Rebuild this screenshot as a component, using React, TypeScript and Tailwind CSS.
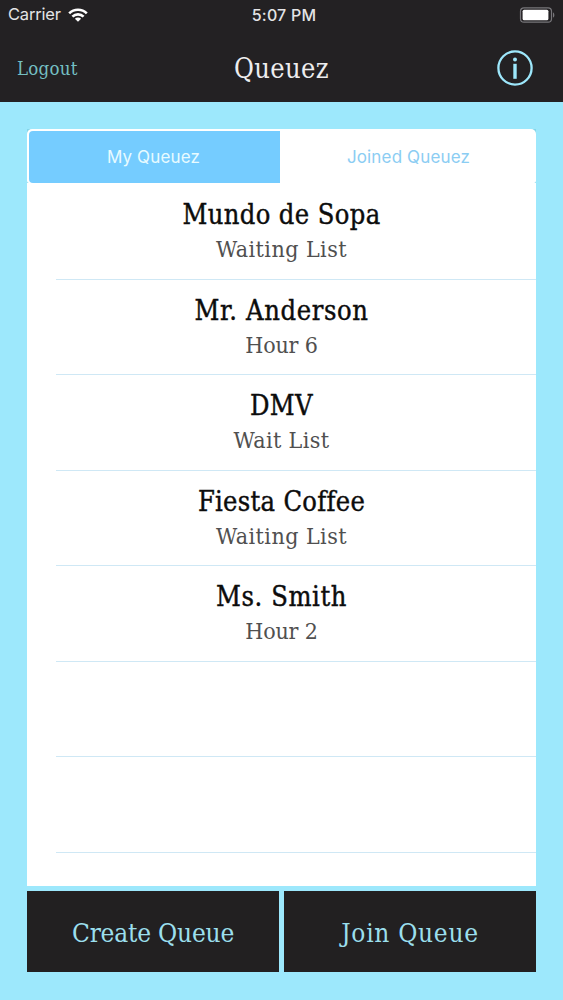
import React, { useState } from 'react';

interface Queue {
  name: string;
  detail: string;
  nameClass: string;
  detailClass: string;
}

const queues: Queue[] = [
  { name: 'Mundo de Sopa', detail: 'Waiting List', nameClass: 'tracking-[0.4px]', detailClass: 'tracking-[0.45px]' },
  { name: 'Mr. Anderson', detail: 'Hour 6', nameClass: 'tracking-[0.65px]', detailClass: 'tracking-[-0.2px]' },
  { name: 'DMV', detail: 'Wait List', nameClass: 'tracking-[0.4px]', detailClass: 'tracking-[0.4px]' },
  { name: 'Fiesta Coffee', detail: 'Waiting List', nameClass: 'tracking-[0.3px]', detailClass: 'tracking-[0.45px]' },
  { name: 'Ms. Smith', detail: 'Hour 2', nameClass: 'tracking-[0.6px]', detailClass: 'tracking-[-0.2px]' },
];

function StatusBar() {
  return (
    <div className="h-[29px] px-2 grid grid-cols-3 items-center text-[#e4e4e6] font-['Inter',sans-serif]">
      <div className="flex items-center gap-[7px]">
        <span className="text-[16.5px] tracking-[-0.2px]">Carrier</span>
        <svg width="20" height="14" viewBox="0 0 20 14" fill="none" stroke="white" strokeWidth="2.6">
          <path d="M1.2 5.4a12.4 12.4 0 0 1 17.6 0" />
          <path d="M4.4 8.7a7.9 7.9 0 0 1 11.2 0" />
          <path d="M10 13.8 6.9 10.7a4.4 4.4 0 0 1 6.2 0Z" fill="white" stroke="none" />
        </svg>
      </div>
      <span className="text-center text-[16px] font-medium tracking-[0.2px] pl-[5px] whitespace-nowrap">5:07 PM</span>
      <div className="flex justify-end">
        <svg width="36" height="16" viewBox="0 0 36 16">
          <rect x="1.5" y="0.8" width="31" height="14.4" rx="3.5" fill="none" stroke="#77767a" strokeWidth="1.2" />
          <rect x="3.6" y="2.8" width="25.8" height="10.4" rx="1.5" fill="white" />
          <path d="M34 5.4c1.8.6 1.8 4.6 0 5.2z" fill="#77767a" />
        </svg>
      </div>
    </div>
  );
}

function NavBar() {
  return (
    <div className="h-[73px] pt-[5px] pl-[17px] pr-[29px] grid grid-cols-[1fr_auto_1fr] items-center">
      <button className="pt-[2px] text-left text-[18.5px] tracking-[0.25px] text-[#74bfc2]">Logout</button>
      <h1 className="ml-[12px] pt-[3px] text-[27px] tracking-[0.4px] text-[#ededee]">Queuez</h1>
      <button className="justify-self-end" aria-label="Info">
        <svg width="38" height="38" viewBox="0 0 38 38" fill="none" stroke="#9de7fb">
          <circle cx="19" cy="19" r="16.6" strokeWidth="2.3" />
          <circle cx="19" cy="10.5" r="2" fill="#9de7fb" stroke="none" />
          <path d="M19 14.8v15" strokeWidth="3.4" />
        </svg>
      </button>
    </div>
  );
}

function QueueRow({ queue }: { queue?: Queue }) {
  return (
    <li className="h-[95.5px] shrink-0 ml-[29px] border-b border-[#cfe8f5]">
      {queue && (
        <div className="-ml-[29px] pt-[11px] text-center">
          <p className={`text-[27px] leading-[40px] text-[#0c0c0c] [-webkit-text-stroke:0.4px_#0c0c0c] ${queue.nameClass}`}>
            {queue.name}
          </p>
          <p className={`-mt-[2px] text-[23px] leading-[32px] text-[#505050] ${queue.detailClass}`}>{queue.detail}</p>
        </div>
      )}
    </li>
  );
}

export default function App() {
  const [tab, setTab] = useState('mine');

  return (
    <div className="w-[563px] h-[1000px] flex flex-col bg-[#9de8fc] overflow-hidden font-['Roboto_Slab','DejaVu_Serif_Condensed','DejaVu_Serif',serif]">
      <header className="bg-[#232123]">
        <StatusBar />
        <NavBar />
      </header>

      <main className="w-[509px] ml-[27px] mt-[27px] h-[757px] flex flex-col bg-white overflow-hidden">
        <div className="shrink-0 bg-[#84d6ea]">
          <div className="h-[54px] flex pt-[2px] pl-[2px] bg-white rounded-t-[5px] rounded-b-[2px] text-[17px] tracking-[0.15px] font-['Inter',sans-serif]">
            <button
              onClick={() => setTab('mine')}
              className={`w-[251px] pr-[2px] pt-[1px] rounded-l-[4px] ${tab === 'mine' ? 'bg-[#75ccff] text-[#e8fbff]' : 'text-[#8bcdf3]'}`}
            >
              My Queuez
            </button>
            <button
              onClick={() => setTab('joined')}
              className={`flex-1 pl-[1px] pt-[1px] rounded-r-[4px] ${tab === 'joined' ? 'bg-[#75ccff] text-[#e8fbff]' : 'text-[#8bcdf3]'}`}
            >
              Joined Queuez
            </button>
          </div>
        </div>
        <ul className="flex flex-col pt-[1px]">
          {queues.map((queue) => (
            <QueueRow key={queue.name} queue={queue} />
          ))}
          <QueueRow />
          <QueueRow />
        </ul>
      </main>

      <footer className="ml-[27px] mt-[5px] w-[509px] h-[81px] flex gap-[5px] text-[26px] text-[#9bdfed]">
        <button className="flex-1 pt-[3px] bg-[#222021] tracking-[-0.2px]">Create Queue</button>
        <button className="flex-1 pt-[3px] bg-[#222021] tracking-[0.7px]">Join Queue</button>
      </footer>
    </div>
  );
}
